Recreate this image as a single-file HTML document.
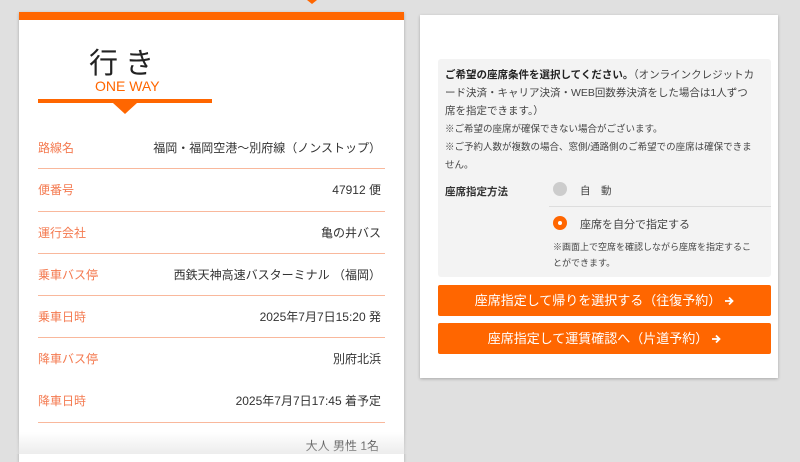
<!DOCTYPE html>
<html><head><meta charset="utf-8"><style>
*{margin:0;padding:0;box-sizing:border-box}
body{width:800px;height:454px;overflow:hidden;background:#e0e0e0;position:relative;font-family:"Liberation Sans","Noto Sans CJK JP",sans-serif;color:#333}
.a{position:absolute}
.card{left:19px;top:12px;width:385px;height:450px;background:#fff;box-shadow:0 1px 3px rgba(0,0,0,.25)}
.top{left:19px;top:12px;width:385px;height:8px;background:#ff6600}
.lbl{position:absolute;left:38px;font-size:12px;color:#f47a50}
.val{position:absolute;right:419px;font-size:12px;color:#333;text-align:right;white-space:nowrap}
.ln{position:absolute;left:38px;width:347px;height:1px;background:#f9b89c}
.rc{left:420px;top:15px;width:358px;height:363px;background:#fff;box-shadow:0 1px 3px rgba(0,0,0,.25)}
.box{left:438px;top:59px;width:333px;height:218px;background:#f3f3f3;border-radius:3px}
.t{position:absolute;left:445px;font-size:10.5px;color:#444;white-space:nowrap}
.btn{position:absolute;left:438px;width:333px;height:31px;background:#ff6600;color:#fff;font-size:13px;text-align:center;line-height:31px;border-radius:2px}
.btn svg{vertical-align:-1px;margin-left:3px}
</style></head><body>
<div class="a" style="left:307px;top:0;width:0;height:0;border-left:5px solid transparent;border-right:5px solid transparent;border-top:4px solid #ff6600"></div>
<div class="a card"></div>
<div class="a top"></div>
<div class="a" style="left:89px;top:40px;font-size:29px;color:#222;letter-spacing:7px">行き</div>
<div class="a" style="left:95px;top:78px;font-size:14px;color:#ff6600">ONE WAY</div>
<div class="a" style="left:38px;top:99px;width:174px;height:4px;background:#ff6600"></div>
<div class="a" style="left:113px;top:103px;width:0;height:0;border-left:12px solid transparent;border-right:12px solid transparent;border-top:11px solid #ff6600"></div>

<div class="lbl" style="top:139px">路線名</div><div class="val" style="top:139px">福岡・福岡空港〜別府線（ノンストップ）</div>
<div class="ln" style="top:168px"></div>
<div class="lbl" style="top:181px">便番号</div><div class="val" style="top:181px">47912 便</div>
<div class="ln" style="top:211px"></div>
<div class="lbl" style="top:224px">運行会社</div><div class="val" style="top:224px">亀の井バス</div>
<div class="ln" style="top:253px"></div>
<div class="lbl" style="top:266px">乗車バス停</div><div class="val" style="top:266px">西鉄天神高速バスターミナル （福岡）</div>
<div class="ln" style="top:295px"></div>
<div class="lbl" style="top:308px">乗車日時</div><div class="val" style="top:308px">2025年7月7日15:20 発</div>
<div class="ln" style="top:337px"></div>
<div class="lbl" style="top:350px">降車バス停</div><div class="val" style="top:350px">別府北浜</div>
<div class="lbl" style="top:392px">降車日時</div><div class="val" style="top:392px">2025年7月7日17:45 着予定</div>
<div class="ln" style="top:422px"></div>
<div class="val" style="top:437px;right:421px">大人 男性 1名</div>
<div class="a" style="left:0;top:432px;width:800px;height:22px;background:linear-gradient(rgba(224,224,224,0),rgba(224,224,224,.6))"></div>

<div class="a rc"></div>
<div class="a box"></div>
<div class="t" style="top:67px"><b style="color:#222">ご希望の座席条件を選択してください。</b>（オンラインクレジットカ</div>
<div class="t" style="top:85px">ード決済・キャリア決済・WEB回数券決済をした場合は1人ずつ</div>
<div class="t" style="top:103px">席を指定できます。）</div>
<div class="t" style="top:121px;font-size:9.5px">※ご希望の座席が確保できない場合がございます。</div>
<div class="t" style="top:139px;font-size:9.5px">※ご予約人数が複数の場合、窓側/通路側のご希望での座席は確保できま</div>
<div class="t" style="top:157px;font-size:9.5px">せん。</div>
<div class="t" style="top:184px;color:#333;font-weight:bold">座席指定方法</div>
<div class="a" style="left:553px;top:182px;width:14px;height:14px;border-radius:50%;background:#ccc"></div>
<div class="t" style="left:580px;top:183px">自　動</div>
<div class="a" style="left:549px;top:206px;width:222px;height:1px;background:#ddd"></div>
<div class="a" style="left:553px;top:216px;width:14px;height:14px;border-radius:50%;background:#ff6600"></div>
<div class="a" style="left:558px;top:221px;width:4px;height:4px;border-radius:50%;background:#fff"></div>
<div class="t" style="left:580px;top:216px;font-size:11px">座席を自分で指定する</div>
<div class="t" style="left:553px;top:240px;font-size:9px">※画面上で空席を確認しながら座席を指定するこ</div>
<div class="t" style="left:553px;top:256px;font-size:9px">とができます。</div>
<div class="btn" style="top:285px">座席指定して帰りを選択する（往復予約）<svg width="10" height="10" viewBox="0 0 10 10"><path d="M1 5H8M5 1.5L8.5 5L5 8.5" stroke="#fff" stroke-width="1.8" fill="none"/></svg></div>
<div class="btn" style="top:323px">座席指定して運賃確認へ（片道予約）<svg width="10" height="10" viewBox="0 0 10 10"><path d="M1 5H8M5 1.5L8.5 5L5 8.5" stroke="#fff" stroke-width="1.8" fill="none"/></svg></div>
</body></html>
